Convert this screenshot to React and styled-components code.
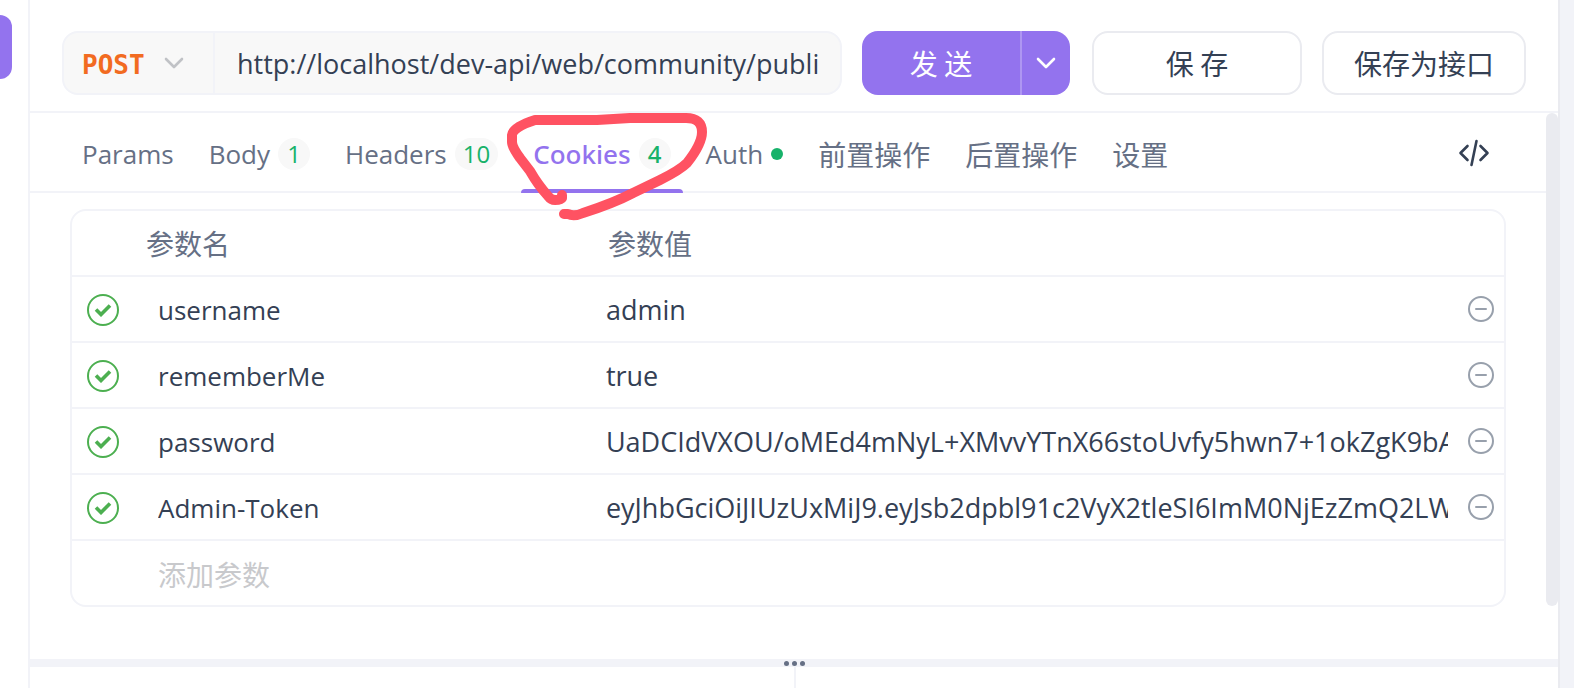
import { useState } from "react";
import styled, { createGlobalStyle, css } from "styled-components";

const tabs = [
  { id: "params", label: "Params" },
  { id: "body", label: "Body", count: 1 },
  { id: "headers", label: "Headers", count: 10 },
  { id: "cookies", label: "Cookies", count: 4, marked: true },
  { id: "auth", label: "Auth", dot: true },
  { id: "pre", label: "前置操作", cjk: true },
  { id: "post", label: "后置操作", cjk: true },
  { id: "settings", label: "设置", cjk: true },
];

const cookies = [
  { name: "username", value: "admin" },
  { name: "rememberMe", value: "true" },
  {
    name: "password",
    value: "UaDCIdVXOU/oMEd4mNyL+XMvvYTnX66stoUvfy5hwn7+1okZgK9bA",
  },
  {
    name: "Admin-Token",
    value: "eyJhbGciOiJIUzUxMiJ9.eyJsb2dpbl91c2VyX2tleSI6ImM0NjEzZmQ2LW",
  },
];

function Chevron() {
  return (
    <svg width="20" height="12" viewBox="0 0 20 12" fill="none">
      <path
        d="M2 2l8 8 8-8"
        stroke="currentColor"
        strokeWidth="2.6"
        strokeLinecap="round"
        strokeLinejoin="round"
      />
    </svg>
  );
}

function CodeIcon() {
  return (
    <svg width="32" height="28" viewBox="0 0 32 28" fill="none">
      <path
        d="M9.5 7L2.5 14l7 7M22.5 7l7 7-7 7M18.5 2l-5 24"
        stroke="currentColor"
        strokeWidth="2.6"
        strokeLinecap="round"
        strokeLinejoin="round"
      />
    </svg>
  );
}

function MinusCircle() {
  return (
    <svg width="26" height="26" viewBox="0 0 26 26" fill="none">
      <circle cx="13" cy="13" r="12" stroke="currentColor" strokeWidth="2" />
      <path
        d="M8 13h10"
        stroke="currentColor"
        strokeWidth="2"
        strokeLinecap="round"
      />
    </svg>
  );
}

function CookieRow({ name, value }) {
  const [enabled, setEnabled] = useState(true);

  return (
    <Row>
      <Cell>
        <CheckLabel>
          <CheckBox
            type="checkbox"
            aria-label={name}
            checked={enabled}
            onChange={() => setEnabled((prev) => !prev)}
          />
          {enabled && (
            <CheckMark width="18" height="14" viewBox="0 0 18 14" fill="none">
              <path d="M2 6.5l5 5L16 2.5" stroke="#4caf50" strokeWidth="3.6" />
            </CheckMark>
          )}
        </CheckLabel>
      </Cell>
      <Cell $inset>
        <TextField aria-label="参数名" defaultValue={name} />
      </Cell>
      <Cell>
        <TextField $large aria-label="参数值" defaultValue={value} />
      </Cell>
      <Cell>
        <RemoveButton type="button" aria-label="删除">
          <MinusCircle />
        </RemoveButton>
      </Cell>
    </Row>
  );
}

function App() {
  const [active, setActive] = useState("cookies");

  return (
    <Page>
      <GlobalStyle />
      <LeftRail>
        <RailButton type="button" aria-label="新建" />
      </LeftRail>
      <Main>
        <Toolbar>
          <UrlGroup>
            <MethodLabel>
              <Method aria-label="请求方法" defaultValue="POST">
                <option>POST</option>
                <option>GET</option>
              </Method>
              <Chevron />
            </MethodLabel>
            <UrlInput
              aria-label="URL"
              defaultValue="http://localhost/dev-api/web/community/publish"
            />
          </UrlGroup>
          <SendGroup>
            <SendButton type="button">发 送</SendButton>
            <SendMore type="button" aria-label="更多">
              <Chevron />
            </SendMore>
          </SendGroup>
          <SaveGroup>
            <OutlineButton type="button" $wide>
              保 存
            </OutlineButton>
            <OutlineButton type="button">保存为接口</OutlineButton>
          </SaveGroup>
        </Toolbar>
        <Editor>
          <Scroller>
            <TabBar>
              <TabList role="tablist">
                {tabs.map((tab) => (
                  <Tab
                    key={tab.id}
                    type="button"
                    role="tab"
                    aria-selected={active === tab.id}
                    $active={active === tab.id}
                    $cjk={tab.cjk}
                    onClick={() => setActive(tab.id)}
                  >
                    {tab.label}
                    {tab.count && <Badge>{tab.count}</Badge>}
                    {tab.dot && <Dot />}
                    {tab.marked && (
                      <Scribble viewBox="500 108 212 120" fill="none">
                        <path
                          d="M562 195V198Q561 200 555 200Q551 200 548 196Q538 185 530 171L520 158Q512 147 512 142V135Q513 127 535 120H597Q613 119 630 118H686Q702 118 702 132Q702 144 687 163Q680 170 660 180L633 193Q614 203 583 213Q574 217 568 214H564"
                          stroke="#ff5262"
                          strokeWidth="10"
                          strokeLinecap="round"
                          strokeLinejoin="round"
                        />
                      </Scribble>
                    )}
                  </Tab>
                ))}
              </TabList>
              <CodeButton type="button" aria-label="代码">
                <CodeIcon />
              </CodeButton>
            </TabBar>
            <Table>
              <thead>
                <Row>
                  <Cell />
                  <HeadCell>参数名</HeadCell>
                  <HeadCell>参数值</HeadCell>
                  <Cell />
                </Row>
              </thead>
              <tbody>
                {cookies.map((cookie) => (
                  <CookieRow key={cookie.name} {...cookie} />
                ))}
                <Row>
                  <Cell />
                  <Cell $inset>
                    <TextField
                      $cjk
                      aria-label="添加参数"
                      placeholder="添加参数"
                    />
                  </Cell>
                  <Cell />
                  <Cell />
                </Row>
              </tbody>
            </Table>
          </Scroller>
          <ScrollThumb />
        </Editor>
        <Splitter>
          <SplitDot />
          <SplitDot />
          <SplitDot />
        </Splitter>
        <Response>
          <ResponsePane />
          <ResponsePane />
        </Response>
      </Main>
      <RightRail />
    </Page>
  );
}

export default App;

const GlobalStyle = createGlobalStyle`
  * {
    box-sizing: border-box;
  }

  body {
    margin: 0;
    background: #fff;
    color: #344054;
  }

  body, button, input, select {
    font-family: "Open Sans", "Noto Sans CJK SC", sans-serif;
    font-size: 26px;
    line-height: 36px;
  }

  button, input, select {
    margin: 0;
    padding: 0;
    border: 0;
    background: none;
    color: inherit;
  }

  svg {
    display: block;
    flex: none;
  }
`;

const cjkText = css`
  font-family: "Noto Sans CJK SC", sans-serif;
  font-size: 28px;
`;

const Page = styled.div`
  display: flex;
  min-height: 100vh;
`;

const LeftRail = styled.aside`
  flex: none;
  width: 30px;
  padding-top: 15px;
  border-right: 2px solid #f2f3f8;
`;

const RailButton = styled.button`
  display: block;
  width: 12px;
  height: 64px;
  border-radius: 0 16px 16px 0;
  background: #9373ee;
`;

const RightRail = styled.aside`
  flex: none;
  width: 16px;
  border-left: 2px solid #eaebf0;
  background: #f2f3f8;
`;

const Main = styled.main`
  flex: 1;
  min-width: 0;
  display: flex;
  flex-direction: column;
`;

const Toolbar = styled.div`
  display: flex;
  padding: 31px 32px 16px;
  border-bottom: 2px solid #f2f3f8;
`;

const UrlGroup = styled.div`
  flex: 1;
  min-width: 0;
  display: flex;
  height: 64px;
  border: 2px solid #f2f3f8;
  border-radius: 16px;
  background: #f8f8f8;
`;

const MethodLabel = styled.label`
  flex: none;
  display: flex;
  align-items: center;
  gap: 18px;
  padding: 0 29px 0 18px;
  border-right: 2px solid #f2f3f8;
  color: #c0c2c6;
`;

const Method = styled.select`
  appearance: none;
  width: 64px;
  padding-top: 4px;
  font-family: "DejaVu Sans Mono", monospace;
  font-size: 26px;
  font-weight: 700;
  color: #f26b21;
`;

const UrlInput = styled.input`
  flex: 1;
  min-width: 0;
  margin: 0 22px;
  padding-top: 2px;
  font-size: 27px;
`;

const SendGroup = styled.div`
  display: flex;
  margin: 0 22px 0 20px;
  border-radius: 16px;
  background: #9373ee;
  color: #fff;
`;

const SendButton = styled.button`
  ${cjkText}
  width: 158px;
`;

const SendMore = styled.button`
  display: flex;
  align-items: center;
  justify-content: center;
  width: 50px;
  border-left: 2px solid #ae96f2;
`;

const SaveGroup = styled.div`
  display: flex;
  gap: 20px;
`;

const OutlineButton = styled.button`
  ${cjkText}
  width: ${(props) => (props.$wide ? "210px" : "204px")};
  border: 2px solid #eaebf0;
  border-radius: 16px;
`;

const Editor = styled.section`
  display: flex;
`;

const Scroller = styled.div`
  flex: 1;
  min-width: 0;
  padding-bottom: 52px;
`;

const ScrollThumb = styled.div`
  flex: none;
  width: 12px;
  margin-bottom: 53px;
  border-radius: 6px;
  background: #eaebf0;
`;

const TabBar = styled.div`
  display: flex;
  align-items: center;
  justify-content: space-between;
  height: 80px;
  padding: 0 56px 0 40px;
  border-bottom: 2px solid #f2f3f8;
`;

const TabList = styled.div`
  display: flex;
  gap: 11px;
`;

const Tab = styled.button`
  position: relative;
  display: flex;
  align-items: center;
  gap: 8px;
  height: 80px;
  padding: 4px 12px 0;
  white-space: nowrap;
  color: #667085;
  ${(props) => props.$cjk && cjkText}
  ${(props) =>
    props.$active &&
    css`
      color: #9373ee;
      font-family: "Noto Sans", sans-serif;
      font-weight: 500;

      &::after {
        content: "";
        position: absolute;
        left: 0;
        right: 0;
        bottom: -1px;
        height: 4px;
        border-radius: 4px 4px 0 0;
        background: #9373ee;
      }
    `}
`;

const Badge = styled.span`
  min-width: 32px;
  padding: 0 8px;
  border-radius: 16px;
  background: #f8f8f8;
  color: #17b26a;
  font-size: 24px;
  line-height: 32px;
  text-align: center;
`;

const Dot = styled.span`
  width: 12px;
  height: 12px;
  border-radius: 50%;
  background: #17b26a;
`;

const Scribble = styled.svg`
  position: absolute;
  z-index: 1;
  left: -21px;
  top: -4px;
  width: 212px;
  height: 120px;
  pointer-events: none;
`;

const CodeButton = styled.button`
  display: flex;
  padding-top: 2px;
`;

const RemoveButton = styled.button`
  display: flex;
  color: #98a0ac;
`;

const Table = styled.table`
  display: block;
  margin: 16px 40px 0;
  border: 2px solid #f2f3f8;
  border-radius: 16px;

  thead,
  tbody {
    display: block;
  }
`;

const Row = styled.tr`
  display: grid;
  grid-template-columns: 60px minmax(0, 8fr) minmax(0, 15fr) 44px;
  height: 66px;
  border-bottom: 2px solid #f2f3f8;

  tbody > &:last-child {
    height: 64px;
    border-bottom: 0;
  }
`;

const Cell = styled.td`
  display: flex;
  align-items: center;
  min-width: 0;
  padding: 0 0 0 ${(props) => (props.$inset ? "14px" : "0")};

  &:last-child {
    padding-left: 8px;
  }
`;

const HeadCell = styled.th`
  ${cjkText}
  padding: 0 14px;
  font-weight: 400;
  line-height: 64px;
  text-align: left;
  color: #667085;
`;

const CheckLabel = styled.label`
  display: grid;
  place-items: center;
  margin-left: 15px;
  padding-top: 2px;

  > * {
    grid-area: 1 / 1;
  }
`;

const CheckBox = styled.input`
  appearance: none;
  width: 32px;
  height: 32px;
  border: 2px solid #4caf50;
  border-radius: 50%;
`;

const CheckMark = styled.svg`
  pointer-events: none;
`;

const TextField = styled.input`
  flex: 1;
  min-width: 0;
  margin: 0 12px;
  padding-top: 2px;
  font-size: ${(props) => (props.$large ? "27px" : "26px")};
  ${(props) => props.$cjk && cjkText}

  &::placeholder {
    color: #c8c9cc;
    opacity: 1;
  }
`;

const Splitter = styled.div`
  display: flex;
  align-items: center;
  justify-content: center;
  gap: 3px;
  height: 8px;
  background: #f2f3f8;
`;

const SplitDot = styled.span`
  width: 5px;
  height: 5px;
  border-radius: 50%;
  background: #667085;
`;

const Response = styled.section`
  flex: 1;
  display: flex;
  min-height: 20px;
`;

const ResponsePane = styled.div`
  flex: 0 0 50%;

  & + & {
    border-left: 2px solid #f2f3f8;
  }
`;
